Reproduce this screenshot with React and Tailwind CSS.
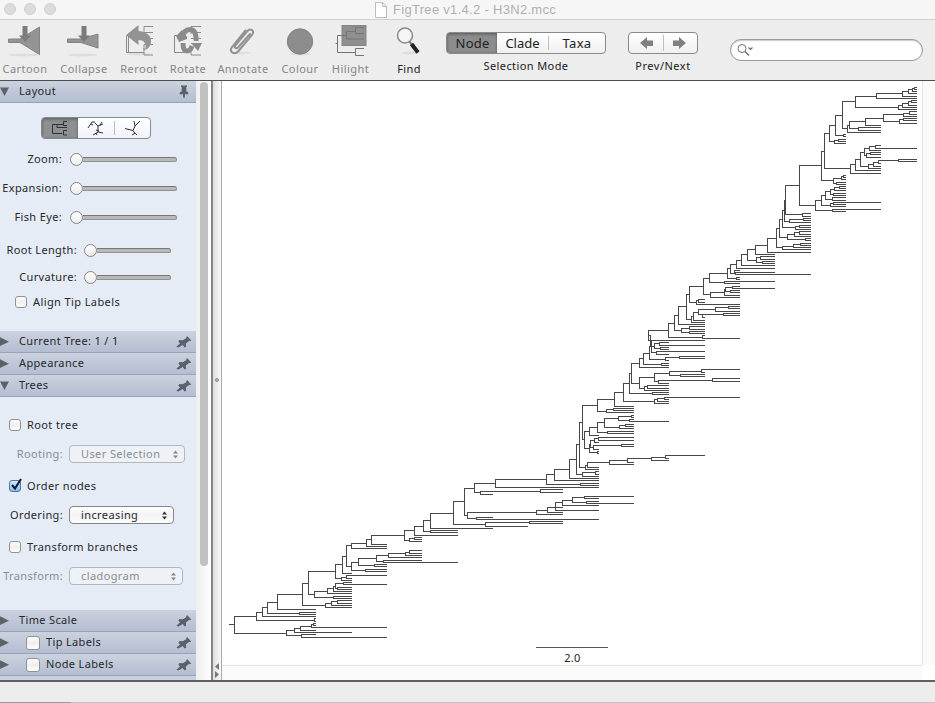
import React from "react";

// Each tree region lists its nodes as [x, topY, topEndX, bottomY, bottomEndX],
// measured in thirds of a pixel from the region's origin.
const REGIONS = [
  {
    ox: 780, oy: 80,
    nodes: [
      [58,256,125,376,106],[125,214,134,301,160],[134,160,149,265,211],[149,136,166,184,163],[166,106,187,166,190],
      [187,65,226,145,202],[226,49,289,82,355],[289,40,367,55,410],[367,34,385,49,410],[385,28,397,40,410],
      [397,25,403,34,410],[403,22,410,28,410],[355,76,367,88,410],[367,70,385,82,410],[385,64,394,76,410],
      [394,61,410,67,410],[202,136,208,157,302],[208,124,256,145,235],[256,115,310,136,302],[310,103,370,124,358],
      [370,100,388,109,410],[388,94,410,103,410],[358,118,370,130,410],[370,115,410,121,410],[235,142,302,151,302],
      [190,163,197,169,197],[163,181,175,190,197],[175,178,197,184,197],[211,253,226,280,302],[226,238,241,271,302],
      [241,217,253,259,265],[253,205,268,226,259],[268,199,286,211,302],[286,196,302,205,410],[259,220,271,232,302],
      [271,217,302,223,302],[265,253,280,265,302],[280,247,295,259,302],[295,241,355,250,302],[355,238,410,244,410],
      [160,295,184,310,169],[184,289,190,298,197],[190,286,197,292,197],[169,307,197,313,197],[106,361,125,391,157],
      [157,388,302,394,197],[125,346,136,376,151],[136,334,151,358,157],[151,328,163,343,160],[163,322,178,331,197],
      [178,319,197,325,197],[160,340,197,346,197],[157,352,197,361,197],[151,370,160,379,197],[160,367,302,373,197],
    ],
  },
  {
    ox: 640, oy: 180,
    nodes: [
      [436,16,478,103,487],[487,100,512,109,512],[433,61,436,124,448],[448,118,490,127,512],[490,115,512,121,512],
      [428,91,434,142,466],[466,139,478,148,512],[478,136,512,142,512],[418,118,428,172,442],[442,163,463,178,496],
      [463,157,478,169,512],[478,154,512,163,512],[496,175,512,181,512],[409,145,418,202,428],[428,199,460,208,512],
      [460,193,481,202,512],[481,190,512,196,512],[382,175,409,217,512],[346,196,382,223,404],[322,208,346,241,349],
      [349,232,361,247,367],[361,229,404,238,404],[367,244,404,250,404],[304,223,322,256,404],[289,241,304,265,404],
      [271,253,289,280,283],[283,271,299,280,286],[286,277,404,283,512],[262,265,271,295,289],[289,292,299,298,299],
      [208,280,262,307,253],[253,304,404,310,299],[190,295,208,343,211],[211,337,253,352,299],[253,328,256,346,299],
      [256,322,277,334,271],[277,319,299,325,404],[271,331,299,337,299],[148,319,190,367,169],[169,361,175,373,299],
      [175,358,194,367,194],[139,343,148,418,154],[154,409,160,427,194],[160,397,175,421,194],[175,388,226,403,187],
      [187,403,250,412,194],[226,382,265,394,299],[265,379,299,385,299],[250,400,299,406,299],[115,379,139,433,194],
      [103,406,115,451,125],[125,445,148,457,148],[148,439,194,448,194],[148,454,194,460,194],[85,430,103,472,187],
      [187,466,194,475,299],
    ],
  },
  {
    ox: 560, oy: 320,
    nodes: [
      [265,31,325,61,434],[271,46,271,79,283],[265,46,271,46,271],[274,61,434,97,289],[283,70,298,85,301],
      [298,67,326,76,434],[301,82,326,88,326],[289,94,434,103,326],[268,79,274,118,316],[316,112,358,121,326],
      [358,109,434,115,434],[250,100,268,133,304],[304,130,326,136,326],[238,115,250,142,326],[214,130,238,190,238],
      [238,172,283,205,253],[283,160,328,184,295],[328,154,424,166,361],[424,148,539,157,434],[361,163,434,169,434],
      [295,181,457,190,326],[457,175,539,184,539],[253,199,262,211,326],[262,196,326,205,326],[208,160,214,220,277],
      [277,217,326,223,326],[190,190,208,244,283],[283,238,292,250,326],[292,235,313,244,326],[313,232,539,238,326],
      [163,217,190,259,221],[112,238,163,274,139],[139,268,160,277,221],[160,265,221,271,221],[67,256,112,358,73],
      [73,334,88,385,88],[88,322,112,346,116],[112,307,133,337,142],[142,334,221,340,221],[133,295,175,322,178],
      [175,289,214,301,208],[214,286,221,292,221],[208,298,221,304,326],[178,316,196,325,221],[196,313,221,319,221],
      [88,373,91,397,112],[112,394,116,400,116],[91,361,103,382,100],[103,355,115,367,116],[115,352,221,361,221],
      [100,376,184,388,116],[184,373,221,379,221],[58,307,67,442,76],[76,436,82,448,116],[82,427,148,442,116],
      [148,421,202,433,221],[202,415,274,427,221],[274,412,316,421,326],[316,406,434,415,326],[49,373,58,463,67],
      [67,457,106,469,116],[106,454,116,463,116],[28,418,49,475,116],
    ],
  },
  {
    ox: 420, oy: 440,
    nodes: [
      [403,88,448,121,536],[379,103,403,133,481],[481,130,536,136,536],[226,118,379,142,536],[163,130,226,157,181],
      [181,154,361,163,218],[361,148,428,157,428],[133,145,163,226,142],[142,217,349,235,169],[349,211,382,223,428],
      [382,202,428,217,428],[406,187,428,211,536],[428,181,457,196,536],[457,172,493,187,499],[493,169,641,175,536],
      [499,184,536,190,641],[169,232,218,238,536],[100,184,133,253,196],[196,247,328,259,323],[328,244,428,250,428],
      [31,220,100,265,218],[10,241,31,274,31],[31,271,113,277,113],
    ],
  },
  {
    ox: 222, oy: 520,
    nodes: [
      [577,19,604,46,707],[547,31,577,61,562],[562,55,577,64,599],[577,52,599,58,599],[448,46,547,73,494],
      [433,58,448,79,494],[388,70,433,85,494],[373,76,388,139,388],[388,127,409,151,430],[409,115,463,136,457],
      [463,106,499,124,484],[499,100,550,112,599],[550,97,562,106,599],[562,91,599,100,599],[484,121,599,127,707],
      [457,133,494,139,494],[430,148,494,154,494],[361,109,373,160,388],[340,133,361,175,358],[358,172,373,181,388],
      [373,166,494,175,388],[259,154,340,223,277],[277,214,316,232,334],[316,205,334,220,388],[334,199,340,214,388],
      [340,190,364,205,346],[364,187,388,193,494],[346,202,388,208,388],[334,229,388,235,388],[241,190,259,256,310],
      [310,250,328,262,388],[328,244,346,256,388],[346,241,388,250,388],[166,223,241,268,281],[136,247,166,280,232],
      [232,277,281,283,281],[121,262,136,289,281],[103,277,121,301,277],[277,295,281,304,281],[37,289,103,340,193],
      [193,331,217,346,238],[238,343,281,352,494],[217,325,235,337,388],[235,319,268,331,281],[268,313,274,322,494],
      [274,310,281,316,281],[19,313,37,313,37],
    ],
  },
];

const treePath = REGIONS.map(({ ox, oy, nodes }) =>
  nodes
    .map(([x, y1, e1, y2, e2]) => {
      const px = (v) => Math.floor(v / 3) + ox - 222 + 0.5;
      const py = (v) => Math.floor(v / 3) + oy - 81 + 0.5;
      return `M${px(e1)} ${py(y1)}H${px(x)}V${py(y2)}H${px(e2)}`;
    })
    .join("")
).join("");

function Tree() {
  return (
    <svg width="700" height="584" className="block" fill="none">
      <path d={treePath} stroke="#484848" strokeLinecap="square" shapeRendering="crispEdges" />
      <path d="M314 566.5H386" stroke="#555" shapeRendering="crispEdges" />
      <text x="350.5" y="581" textAnchor="middle" fill="#222" fontSize="11" letterSpacing="0.3" fontFamily="Noto Sans, sans-serif">2.0</text>
    </svg>
  );
}

function Pin({ upright }) {
  return upright ? (
    <svg width="12" height="14" viewBox="0 0 12 14" fill="#5b616b">
      <path d="M3 0.5h6v1.6H8.3v4.2c1.5.5 2.2 1.4 2.2 2.9H7v2.4l-1 2-1-2V9.200H1.500c0-1.500.7-2.400 2.200-2.900V2.100H3z" />
    </svg>
  ) : (
    <svg width="16" height="12" viewBox="0 0 16 12" fill="#5b616b">
      <path d="M0.300 10.800L4 7.600 2.300 5.500 3.500 4l3.300.2 3.700-2.300-.4-.8 1.300-.9 3.800 4.200-1.200.9-.8-.5-3.300 2.700.2 3.200-1.500.9-1.900-2.500-4.200 2.300z" />
    </svg>
  );
}

function Disclosure({ open }) {
  return open ? (
    <svg width="9" height="9" viewBox="0 0 9 9"><path d="M0 0.500H9L4.500 9z" fill="#5d6168" /></svg>
  ) : (
    <svg width="9" height="9" viewBox="0 0 9 9"><path d="M0 0.300L9 4.700 0 9z" fill="#5d6168" /></svg>
  );
}

function Check({ checked, big }) {
  return (
    <span className={`shrink-0 rounded-[3px] border ${big ? "h-[14px] w-[14px]" : "h-[12px] w-[12px]"} ${checked ? "border-[#5a7299] bg-linear-to-b from-[#d5e6f8] to-[#83bdf3]" : "border-[#929292] bg-linear-to-b from-white via-[#eeeeee] to-white"}`}>
      {checked && (
        <svg width="15" height="15" viewBox="0 0 15 15" className="-mt-[3px] block max-w-none" fill="none">
          <path d="M2 7l3 3.500L11 1" stroke="#0b1430" strokeWidth="2" />
        </svg>
      )}
    </span>
  );
}

function SectionHeader({ title, open, upright, box }) {
  return (
    <div className="flex h-[22px] shrink-0 items-center border-b border-[#98a3bb] bg-linear-to-b from-[#cbd2df] to-[#b4bed1]">
      <Disclosure open={open} />
      {box && <span className="ml-[17px] flex"><Check big /></span>}
      <span className={`${box ? "ml-[6px]" : "ml-[10px]"} flex-1 tracking-[0.35px]`}>{title}</span>
      <span className={upright ? "mr-[6px]" : "mr-[4px]"}><Pin upright={upright} /></span>
    </div>
  );
}

function SliderRow({ label, short, className }) {
  return (
    <div className={`flex items-center ${className}`}>
      <span className={`text-right whitespace-nowrap tracking-[0.35px] ${short ? "w-[77px]" : "w-[62px]"}`}>{label}</span>
      <span className={`flex items-center ${short ? "ml-[7px] w-[87px]" : "ml-[8px] w-[107px]"}`}>
        <span className="h-[13px] w-[13px] shrink-0 rounded-full border border-[#858585] bg-linear-to-b from-white to-[#ececec]" />
        <span className="h-[5px] flex-1 rounded-r-[3px] border border-l-0 border-[#929292] border-t-[#777] bg-[#b9b9b9]" />
      </span>
    </div>
  );
}

function SelectRow({ label, value, disabled, width }) {
  return (
    <div className={`flex h-7 items-center ${disabled ? "text-[#8a8d92]" : ""}`}>
      <span className="w-[63px] text-right whitespace-nowrap tracking-[0.35px]">{label}</span>
      <span className={`ml-[6px] flex h-[18px] items-center rounded-[4px] border pr-[6px] pl-[11px] ${width} ${disabled ? "border-[#b3b7be] bg-[#eef1f6]" : "border-[#868686] bg-linear-to-b from-white via-[#f3f3f3] to-[#fbfbfb]"}`}>
        <span className="flex-1 tracking-[0.4px] whitespace-nowrap">{value}</span>
        <svg width="5" height="9" viewBox="0 0 5 9" fill={disabled ? "#888" : "#333"}><path d="M0 3.500L2.500 0.500 5 3.500zM0 5.500L2.500 8.500 5 5.500z" /></svg>
      </span>
    </div>
  );
}

function CheckRow({ label, checked, className }) {
  return (
    <div className={`flex items-center ${className}`}>
      <Check checked={checked} />
      <span className="ml-[6px] tracking-[0.4px]">{label}</span>
    </div>
  );
}

const layoutIcons = [
  <svg key="r" width="18" height="16" viewBox="0 0 18 16" fill="none" stroke="#303030"><path d="M6 4.500H1.500V13.500H11M6 4.500V7.500H16M6 4.500H10M16 1.500H12.500V5.500H16M10 4.500H12M16 10.500H12.500V15H16" /></svg>,
  <svg key="p" width="18" height="16" viewBox="0 0 18 16" fill="none" stroke="#303030"><path d="M1 8L5 2M4 4l2 1M5 2h3M8 3l3 3 5-2M13 5l2-3M11 6v6M9 10l3 1M6 15l5-3 5 1M9 13l1 2" /></svg>,
  <svg key="s" width="18" height="16" viewBox="0 0 18 16" fill="none" stroke="#303030"><path d="M1 8.500L9 10.500 11 6 16 1M11 6l-1-5M9 10.500l2 3M8 15l3-2 2 2" /></svg>,
];

function Sidebar() {
  return (
    <div className="flex w-[196px] flex-col overflow-hidden bg-[#e5ecf6]">
      <SectionHeader title="Layout" open upright />
      <div className="h-[228px] shrink-0 pt-[14px]">
        <div className="ml-[41px] flex h-[22px] w-[110px] overflow-hidden rounded-[4px] border border-[#858990] bg-linear-to-b from-white to-[#f0f3f8]">
          <div className="flex w-[36px] items-center justify-center bg-[#8e8f91] shadow-[inset_0_1px_3px_#555]">{layoutIcons[0]}</div>
          <div className="flex w-[36px] items-center justify-center">{layoutIcons[1]}</div>
          <div className="my-[3px] w-px bg-[#bcbfc4]" />
          <div className="flex flex-1 items-center justify-center">{layoutIcons[2]}</div>
        </div>
        <SliderRow label="Zoom:" className="mt-[6px] h-[29px]" />
        <SliderRow label="Expansion:" className="h-[29px]" />
        <SliderRow label="Fish Eye:" className="h-[29px]" />
        <SliderRow label="Root Length:" short className="mt-[5px] h-[27px]" />
        <SliderRow label="Curvature:" short className="h-[27px]" />
        <CheckRow label="Align Tip Labels" className="ml-[15px] h-[22px]" />
      </div>
      <SectionHeader title="Current Tree: 1 / 1" />
      <SectionHeader title="Appearance" />
      <SectionHeader title="Trees" open />
      <div className="h-[213px] shrink-0 pt-[13px]">
        <CheckRow label="Root tree" className="ml-[9px] h-[30px]" />
        <SelectRow label="Rooting:" value="User Selection" disabled width="w-[116px]" />
        <CheckRow label="Order nodes" checked className="ml-[9px] mt-[3px] h-[30px]" />
        <SelectRow label="Ordering:" value="increasing" width="w-[105px]" />
        <CheckRow label="Transform branches" className="ml-[9px] mt-[3px] h-[30px]" />
        <SelectRow label="Transform:" value="cladogram" disabled width="w-[114px]" />
      </div>
      <SectionHeader title="Time Scale" />
      <SectionHeader title="Tip Labels" box />
      <SectionHeader title="Node Labels" box />
      <div className="flex-1 bg-[#c8d0de]" />
    </div>
  );
}

const TREE_GLYPH = "M9 9.500H2.500V26.500H19M9 9.500H19M19 5.500V13.500M19 5.500H27M19 13.500H27M19 22.500V30.500M19 22.500H27M19 30.500H27";

const toolIcons = {
  Cartoon: (
    <svg width="36" height="32" viewBox="0 0 36 32">
      <ellipse cx="17" cy="30" rx="15" ry="1.500" fill="#dedede" />
      <path d="M1.500 14H13L32.500 2V29.500L13 17.500H1.500z" fill="#949494" stroke="#828282" />
      <path d="M15.500 1h5v9.500h3.500L18 17l-6-6.500h3.500z" fill="#7b7b7b" />
    </svg>
  ),
  Collapse: (
    <svg width="36" height="32" viewBox="0 0 36 32">
      <ellipse cx="17" cy="30" rx="15" ry="1.500" fill="#dedede" />
      <path d="M1.500 14H15L32 9V23L15 17.500H1.500z" fill="#949494" stroke="#828282" />
      <path d="M15.500 1h5v9.500h3.500L18 17l-6-6.500h3.500z" fill="#7b7b7b" />
    </svg>
  ),
  Reroot: (
    <svg width="30" height="32" viewBox="0 0 30 32" fill="none">
      <ellipse cx="14" cy="29" rx="12" ry="1.500" fill="#dedede" />
      <path d="M4.500 10V27.500H20M2 27.500H5M2.500 10.500V27M20 9V1.500H29M20 7.500H29M22 13.500H29M20 25V19.500H29M20 23V30H29" stroke="#8c8c8c" />
      <path d="M2 10L14.500 0v6c7 .5 12.500 4 12.500 10 0 5-3 8-6 9 2-5 0-10-6.500-10v5z" fill="#939393" />
    </svg>
  ),
  Rotate: (
    <svg width="30" height="32" viewBox="0 0 30 32" fill="none">
      <path d="M7 10.500H1.500V27.500H14M18 9V1.500H28M18 7.500H28M18 13.500H28M18 18.500H28M18 25V30H28" stroke="#8c8c8c" />
      <path d="M9 14C10 7 13 4.500 17 4.500 21.500 4.500 23.500 9 23 16M19 21C17.500 25.500 16 26 14 26 11 26 10 22 10 18" stroke="#8b8b8b" strokeWidth="5" />
      <path d="M3 11l6-6 5 7v2l-8 3zM18 18h11l-4 8z" fill="#8b8b8b" />
    </svg>
  ),
  Annotate: (
    <svg width="30" height="32" viewBox="0 0 30 32" fill="none">
      <ellipse cx="13" cy="28" rx="10" ry="1.500" fill="#e0e0e0" />
      <path d="M22 9L10 22.500c-1.500 1.700-4 .2-2.800-1.800L19 6.500c3.500-4 8-1 5 3.500L10.500 26c-4 4.500-10 1-6.500-4L17.500 5.500" stroke="#929292" strokeWidth="2" strokeLinecap="round" />
    </svg>
  ),
  Colour: (
    <svg width="30" height="32" viewBox="0 0 30 32">
      <ellipse cx="15" cy="29" rx="11" ry="1.500" fill="#dedede" />
      <circle cx="15" cy="16.500" r="12.700" fill="#8d8d8d" stroke="#818181" />
    </svg>
  ),
  Hilight: (
    <svg width="32" height="32" viewBox="0 0 32 32" fill="none">
      <rect x="7" y="0.500" width="24" height="20" fill="#8f8f8f" stroke="#858585" />
      <path d="M11 10.500H2.500V27.500H20M0.500 18.500H2.500M11.500 14V6.500H20M11.500 14H29M20.500 9V2.500H29M20.500 8.500H29M29 23.500H20.500V30.500H29" stroke="#747474" />
    </svg>
  ),
};

const TOOLS = [
  ["Cartoon", "w-[50px]"],
  ["Collapse", "w-[68px]"],
  ["Reroot", "w-[42px]"],
  ["Rotate", "w-[56px]"],
  ["Annotate", "w-[54px]"],
  ["Colour", "w-[60px]"],
  ["Hilight", "w-[41px]"],
];

function Toolbar() {
  return (
    <div className="flex h-[61px] shrink-0 border-b border-[#4d4d4d] bg-[#ededed] text-[#222]">
      <div className="flex text-[#858585]">
        {TOOLS.map(([name, width]) => (
          <div key={name} className={`flex shrink-0 flex-col items-center pt-[5px] ${width}`}>
            {toolIcons[name]}
            <span className="mt-[4px] tracking-[0.45px] leading-[15px]">{name}</span>
          </div>
        ))}
      </div>
      <div className="ml-[17px] flex w-[42px] flex-col items-center pt-[5px]">
        <svg width="30" height="32" viewBox="0 0 30 32">
          <ellipse cx="16" cy="28" rx="8" ry="1.500" fill="#dcdcdc" />
          <circle cx="11" cy="10.500" r="7.500" fill="#f5f5f5" stroke="#8b8b8b" strokeWidth="1.500" />
          <path d="M15.500 17l2 2" stroke="#777" strokeWidth="2" />
          <path d="M17.500 19L24 27.500" stroke="#222" strokeWidth="4" />
        </svg>
        <span className="mt-[4px] tracking-[0.4px] leading-[15px]">Find</span>
      </div>
      <div className="ml-[16px] flex w-[160px] flex-col items-center pt-[12px]">
        <div className="flex h-[22px] w-full overflow-hidden rounded-[4px] border border-[#8a8a8a] bg-linear-to-b from-white to-[#f0f0f0] text-[13px] leading-[20px]">
          <span className="w-[50px] bg-[#8c8c8c] pl-px text-center tracking-[0.2px] shadow-[inset_0_1px_3px_#555]">Node</span>
          <span className="w-[51px] text-center">Clade</span>
          <span className="my-[3px] w-px bg-[#c0c0c0]" />
          <span className="flex-1 text-center tracking-[0.3px]">Taxa</span>
        </div>
        <span className="mt-[4px] tracking-[0.4px] leading-[16px]">Selection Mode</span>
      </div>
      <div className="ml-[22px] flex w-[70px] flex-col items-center pt-[12px]">
        <div className="flex h-[22px] w-full items-center justify-center rounded-[4px] border border-[#8a8a8a] bg-linear-to-b from-white to-[#f0f0f0]">
          <svg width="48" height="16" viewBox="0 0 48 16" fill="#808080">
            <path d="M1 8L8 2V5.500H14V11H8V14zM47 8L40 2V5.500H34V11H40V14z" />
            <path d="M24 0h1v16h-1z" fill="#c0c0c0" />
          </svg>
        </div>
        <span className="mt-[4px] tracking-[0.5px] leading-[16px]">Prev/Next</span>
      </div>
      <div className="mt-[19px] ml-[32px] flex h-[22px] w-[193px] items-center rounded-full border border-[#999] bg-white pl-[6px] shadow-[inset_0_1px_1px_#ccc]">
        <svg width="17" height="14" viewBox="0 0 17 14" fill="none" stroke="#707070">
          <circle cx="5" cy="5.500" r="4" /><path d="M8 8.500l4 4" strokeWidth="1.500" /><path d="M11.500 4.500l2 2 2-2" strokeWidth="1.200" />
        </svg>
      </div>
    </div>
  );
}

export default function App() {
  return (
    <div className="flex h-[703px] w-[935px] flex-col overflow-hidden bg-[#ededed] font-['Noto_Sans',sans-serif] text-[11px] text-[#25282c]">
      <div className="flex h-[20px] shrink-0 items-center border-b border-[#d0d0d0] bg-[#f6f6f6]">
        <div className="ml-[4px] flex w-[371px] gap-[8px]">
          {[0, 1, 2].map((i) => (
            <span key={i} className="-mt-[2px] h-[12px] w-[12px] rounded-full border border-[#cfcfcf] bg-[#dcdcdc]" />
          ))}
        </div>
        <svg width="12" height="16" viewBox="0 0 12 16" fill="#fff" stroke="#bcbcbc"><path d="M.5.500H7.500L11.500 4.500V15.500H.5zM7.500.500V4.500H11.500" /></svg>
        <span className="ml-[6px] font-['Liberation_Sans',sans-serif] text-[13px] leading-[18px] tracking-[0.3px] whitespace-nowrap text-[#b0b0b0]">FigTree v1.4.2 - H3N2.mcc</span>
      </div>
      <Toolbar />
      <div className="flex h-[599px] shrink-0">
        <Sidebar />
        <div className="w-[15px] bg-linear-to-r from-[#eeeeee] to-white pt-px pl-[4px]">
          <div className="h-[484px] w-[8px] rounded-full bg-[#c1c1c1]" />
        </div>
        <div className="w-[2px] bg-[#858585]" />
        <div className="flex w-[9px] flex-col items-center border-r border-[#aaaaaa] bg-linear-to-r from-[#dedede] to-[#fafafa]">
          <span className="mt-[297px] h-[4px] w-[4px] shrink-0 rounded-full border border-[#858585] bg-[#c4c4c4]" />
          <svg width="6" height="16" viewBox="0 0 6 16" className="mt-auto mb-px" fill="#777"><path d="M5 0V7L1 3.500zM1 8V15L5 11.500z" /></svg>
        </div>
        <div className="flex w-[700px] flex-col bg-[#fafafa]">
          <div className="h-[584px] bg-white"><Tree /></div>
          <div className="flex-1 border-t border-[#e4e4e4]" />
        </div>
        <div className="flex flex-1 flex-col bg-white">
          <div className="h-[584px] border-l border-[#e6e6e6] bg-[#fafafa]" />
        </div>
      </div>
      <div className="flex h-[23px] shrink-0 items-end border-t-2 border-[#606060] bg-[#ededed]">
        <div className="h-px w-[71px] bg-[#999]" />
        <div className="h-px flex-1 bg-[#c2c2c2]" />
      </div>
    </div>
  );
}
